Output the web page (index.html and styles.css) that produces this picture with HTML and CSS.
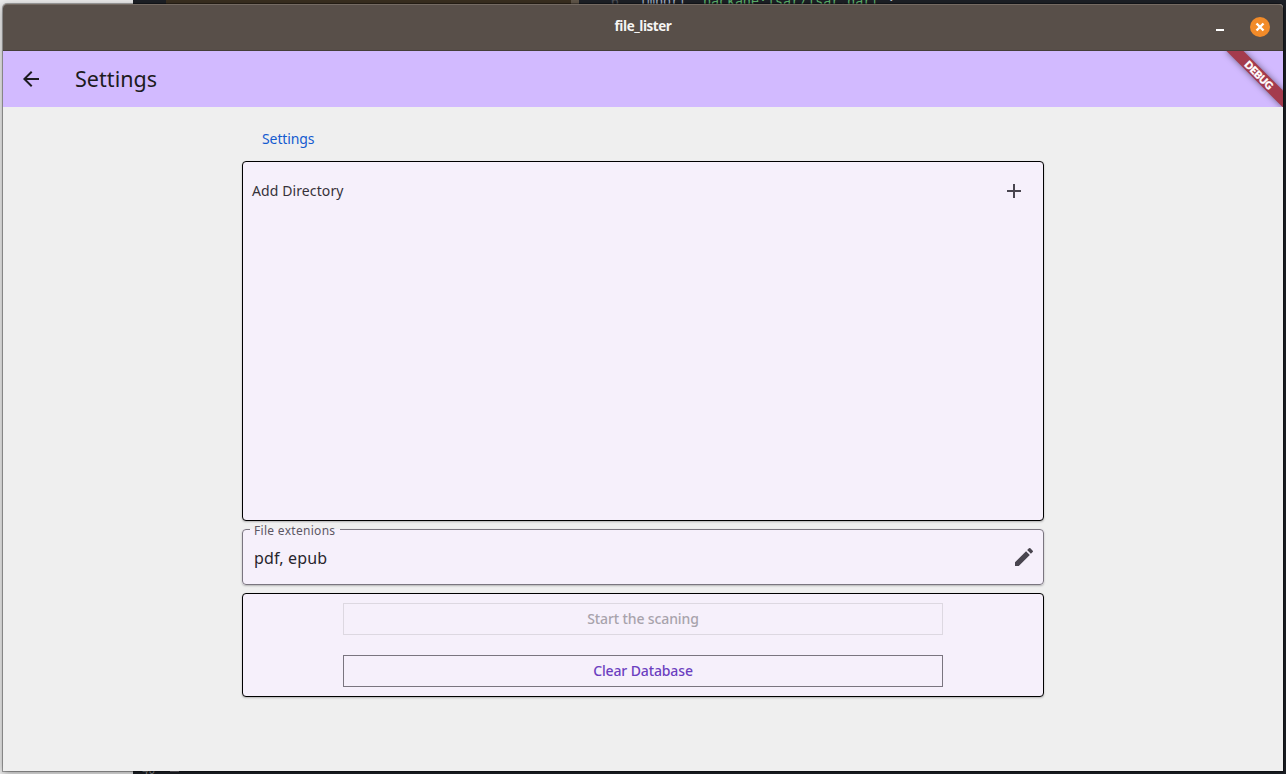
FILE: index.html
```html
<!DOCTYPE html>
<html lang="en">
<head>
<meta charset="utf-8">
<title>file_lister</title>
<link rel="stylesheet" href="styles.css">
</head>
<body>
<div class="desktop">
  <div class="light-window"></div>
  <div class="editor">
    <div class="editor-panel"></div>
    <div class="editor-scroll"></div>
    <div class="editor-code"><span class="line-number">6</span><span class="keyword">import</span> <span class="string">'package:isar/isar.dart'</span>;</div>
    <div class="editor-bottom">40</div>
    <div class="editor-dash"></div>
  </div>
  <main class="window">
    <header class="titlebar">
      <span class="window-title">file_lister</span>
      <span class="minimize"></span>
      <span class="close"><svg width="10" height="10" viewBox="0 0 10 10"><path d="M1.5 1.5l7 7M8.500 1.500L1.500 8.500" stroke="#fff" stroke-width="2.400"/></svg></span>
    </header>
    <div class="appbar">
      <svg class="back" width="24" height="24" viewBox="0 0 24 24"><path fill="#1d1b20" d="M20 11H7.83l5.59-5.59L12 4l-8 8 8 8 1.41-1.41L7.83 13H20v-2z"/></svg>
      <h1 class="appbar-title">Settings</h1>
      <div class="ribbon-clip"><div class="ribbon"><span>DEBUG</span></div></div>
    </div>
    <div class="content">
      <h2 class="section-title">Settings</h2>
      <section class="card directories">
        <span class="directories-label">Add Directory</span>
        <svg width="24" height="24" viewBox="0 0 24 24"><path fill="#49454f" d="M19 13h-6v6h-2v-6H5v-2h6V5h2v6h6v2z"/></svg>
      </section>
      <fieldset class="field">
        <legend>File extenions</legend>
        <div class="field-row">
          <span class="field-value">pdf, epub</span>
          <svg width="24" height="24" viewBox="0 0 24 24"><path fill="#49454f" d="M3 17.25V21h3.75L17.81 9.94l-3.75-3.75L3 17.25zM20.71 7.04a1 1 0 0 0 0-1.41l-2.34-2.34a1 1 0 0 0-1.41 0l-1.83 1.83 3.75 3.75 1.83-1.83z"/></svg>
        </div>
      </fieldset>
      <section class="card actions">
        <button class="button" disabled>Start the scaning</button>
        <button class="button primary">Clear Database</button>
      </section>
    </div>
  </main>
</div>
</body>
</html>
```
FILE: styles.css
```css
* { box-sizing: border-box; }
body { margin: 0; overflow: hidden; font-family: "Noto Sans", sans-serif; }
span { white-space: nowrap; }
.desktop { position: relative; width: 1286px; height: 774px; overflow: hidden; background: #1a181b; }
.light-window { position: absolute; left: 0; top: 0; width: 133px; height: 774px; background: #ececec; }
.editor { position: absolute; left: 133px; top: 0; width: 1153px; height: 774px; background: #1d2026; }
.editor-panel { position: absolute; left: 33px; top: 0; width: 413px; height: 5px; background: #3a2f20; }
.editor-scroll { position: absolute; left: 438px; top: 0; width: 8px; height: 5px; background: #61574a; }
.editor-code { position: absolute; left: 478px; top: -6px; font: 13.3px/16px "DejaVu Sans Mono", monospace; color: #c5c9d0; white-space: pre; }
.line-number { display: inline-block; width: 28px; color: #4d5058; }
.keyword { color: #a5b2c8; }
.string { color: #5db46c; }
.editor-bottom { position: absolute; left: 9px; top: 765px; font: 11px/12px "DejaVu Sans Mono", monospace; color: #8c8c8c; }
.editor-dash { position: absolute; left: 37px; top: 771px; width: 9px; height: 1px; background: #88858c; }

.window { position: absolute; left: 3px; top: 4px; width: 1280px; height: 767px; display: flex; flex-direction: column; background: #efefef; border-radius: 4px 4px 0 0; box-shadow: 0 0 0 1px rgba(0,0,0,.3), 0 2px 8px rgba(0,0,0,.4); }
.titlebar { position: relative; height: 47px; flex: none; display: flex; align-items: center; justify-content: flex-end; gap: 26px; padding: 0 13px 2px 0; background: #584f49; border-top: 1px solid #746a62; border-bottom: 1px solid #453e39; border-radius: 4px 4px 0 0; }
.window-title { position: absolute; left: 0; right: 0; top: 12px; text-align: center; font: 700 13.5px/18px "Open Sans", sans-serif; letter-spacing: -.45px; color: #f6f5f4; }
.minimize { width: 8px; height: 2px; margin-top: 6px; background: #fff; }
.close { display: flex; align-items: center; justify-content: center; width: 20px; height: 20px; border-radius: 50%; background: #f28b29; }

.appbar { position: relative; height: 56px; flex: none; display: flex; align-items: center; padding-left: 16px; background: #d2baff; }
.back { margin-right: 32px; }
.appbar-title { margin: 0; font-size: 21.5px; line-height: 28px; font-weight: 400; letter-spacing: .05px; color: #1d1b20; }
.ribbon-clip { position: absolute; right: 0; top: 0; width: 70px; height: 56px; overflow: hidden; }
.ribbon { position: absolute; right: -16px; top: 18px; width: 80px; height: 12px; transform: rotate(45deg); display: flex; align-items: center; justify-content: center; background: #a43b4d; box-shadow: 0 0 6px rgba(0,0,0,.5); }
.ribbon span { font: 900 10.2px/12px Lato, sans-serif; color: #fff; -webkit-text-stroke: .4px #fff; }

.content { width: 802px; margin: 0 auto; padding-top: 22px; display: flex; flex-direction: column; gap: 8px; }
.section-title { margin: 0 0 2px; padding-left: 20px; height: 22px; font-size: 14px; line-height: 20px; font-weight: 400; letter-spacing: -.1px; color: #145bd0; }
.card { background: #f6f0fb; border: 1px solid #000; border-radius: 4px; box-shadow: 0 1px 2px rgba(0,0,0,.25); }
.directories { height: 360px; display: flex; justify-content: space-between; align-items: flex-start; padding: 17px 17px 0 9px; font-size: 14px; line-height: 24px; color: #36323a; }
.directories-label { letter-spacing: .1px; }
.field { position: relative; height: 56px; margin: 0; min-width: 0; border: 1px solid #7a757f; border-radius: 4px; padding: 0 7px 0 11px; background: #f6f0fb; box-shadow: 0 1px 2px rgba(0,0,0,.25); }
.field legend { position: absolute; left: 7px; top: -7px; padding: 0 5px 0 4px; font-size: 12px; line-height: 16px; letter-spacing: .3px; color: #5c5763; background: linear-gradient(#efefef 0 6px, #f6f0fb 6px); }
.field-row { height: 54px; display: flex; align-items: center; justify-content: space-between; font-size: 16px; color: #28252d; }
.field-value { padding-top: 2px; letter-spacing: .15px; }
.actions { height: 104px; display: flex; flex-direction: column; align-items: center; gap: 20px; padding-top: 9px; }
.button { width: 600px; height: 32px; flex: none; padding: 0; border: 1px solid #7a757f; background: transparent; font: 500 14px/20px "Noto Sans", sans-serif; letter-spacing: -.12px; }
.button:disabled { border-color: #ddd8e1; color: #a8a3ac; }
.primary { color: #6c3fc0; }
```
